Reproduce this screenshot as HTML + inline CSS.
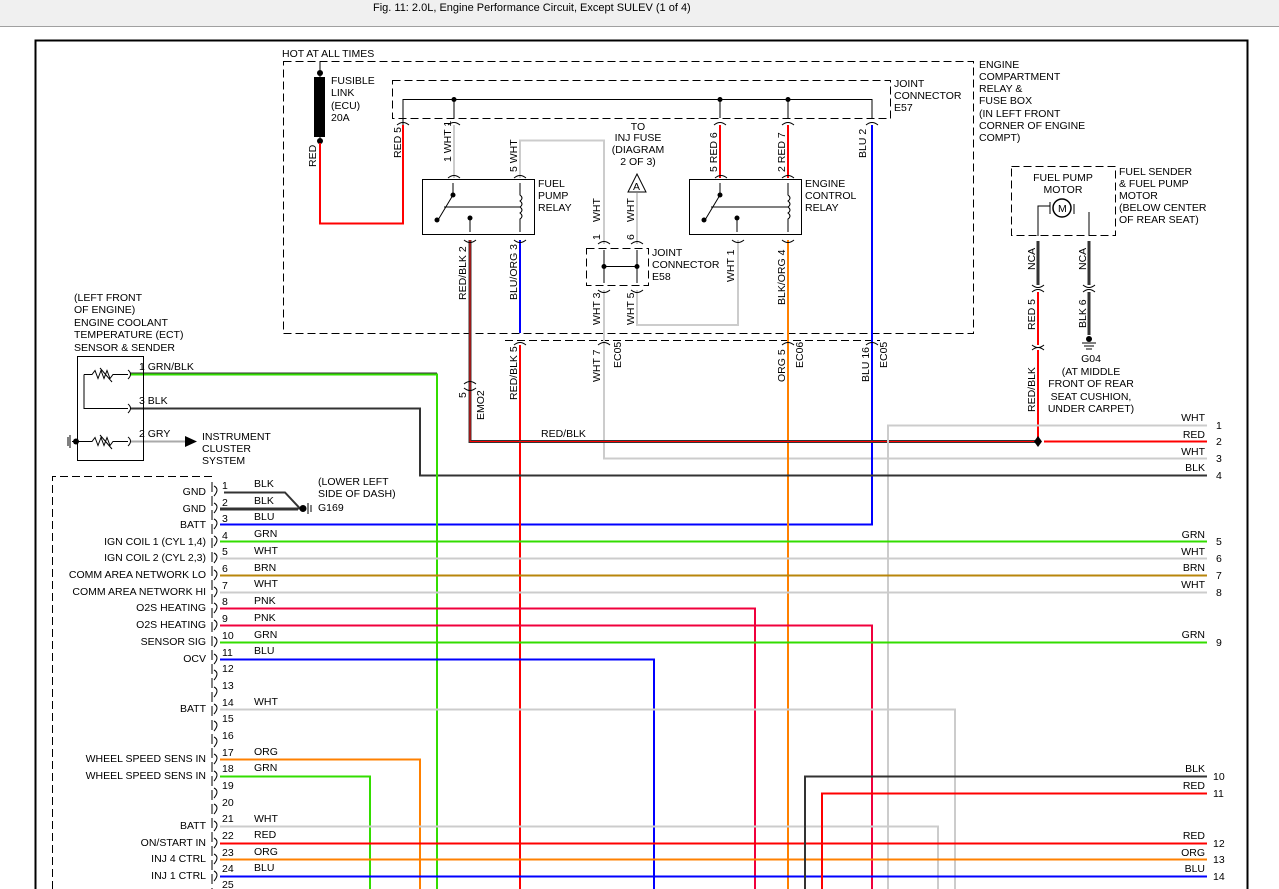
<!DOCTYPE html>
<html><head><meta charset="utf-8"><style>
html,body{margin:0;padding:0;background:#fff;}
svg{display:block;}
text{font-family:"Liberation Sans",Arial,sans-serif;font-size:10.5px;fill:#000;}
.t{font-size:11px;}
</style></head><body>
<svg width="1279" height="889" viewBox="0 0 1279 889" xmlns="http://www.w3.org/2000/svg">
<rect x="0" y="0" width="1279" height="26" fill="#f0f0f0"/>
<line x1="0" y1="26.5" x2="1279" y2="26.5" stroke="#a0a0a0"/>
<text x="373" y="11" class="t">Fig. 11: 2.0L, Engine Performance Circuit, Except SULEV (1 of 4)</text>
<rect x="35.5" y="40.5" width="1212" height="860" fill="none" stroke="#000" stroke-width="2"/>

<g fill="none" stroke="#000" stroke-dasharray="8,4">
<rect x="283.5" y="61.5" width="690" height="272"/>
<rect x="392.5" y="80.5" width="498" height="38"/>
<rect x="586.5" y="248.5" width="62" height="37"/>
<rect x="1011.5" y="166.5" width="104" height="69"/>
<path d="M52.5 889 V476.5 H216"/>
<path d="M505 340.5 H880"/>
</g>

<!-- bus -->
<path d="M403 125 V99.5 H872 V118" fill="none" stroke="#000"/>
<g fill="#000"><circle cx="454" cy="99.5" r="2.5"/><circle cx="720" cy="99.5" r="2.5"/><circle cx="788" cy="99.5" r="2.5"/></g>
<path d="M454 99 V118 M720 99 V118 M788 99 V118" stroke="#000"/>

<!-- fusible link -->
<text x="282" y="57">HOT AT ALL TIMES</text>
<path d="M320 62 V145" stroke="#000"/>
<rect x="314" y="77" width="11" height="60" fill="#000"/>
<circle cx="320" cy="73" r="3"/><circle cx="320" cy="141" r="3"/>
<text x="331" y="84">FUSIBLE</text><text x="331" y="96">LINK</text><text x="331" y="109">(ECU)</text><text x="331" y="121">20A</text>
<path d="M320 143 V223.5 H403 V125" fill="none" stroke="#f00" stroke-width="2"/>

<!-- colored wires top -->
<g fill="none" stroke-width="2">
<path d="M454 125 V178" stroke="#ccc"/>
<path d="M520 178 V140.5 H604 V244" stroke="#ccc"/>
<path d="M637 193 V244" stroke="#ccc"/>
<path d="M604 290 V458.5 H1207" stroke="#ccc"/>
<path d="M637 290 V325 H738 V240" stroke="#ccc"/>
<path d="M720 125 V178" stroke="#f00"/>
<path d="M788 125 V178" stroke="#f00"/>
<path d="M872 125 V524.5 H220" stroke="#00f"/>
<path d="M788 240 V889" stroke="#ff8000"/>
<path d="M520 240 V333" stroke="#00f"/>
<path d="M520 345 V889" stroke="#f00"/>
<path d="M470 240 V441.5 H1038" stroke="#333" stroke-width="3"/>
<path d="M470 240 V441.5 H1038" stroke="#f00" stroke-width="1"/>
<path d="M1038 241 V285" stroke="#333" stroke-width="3"/>
<path d="M1089 241 V285 M1089 292 V335" stroke="#333" stroke-width="3"/>
<path d="M1038 292 V345" stroke="#f00"/>
<path d="M1038 350 V441" stroke="#f00"/>
<path d="M1044 441.5 H1207" stroke="#f00"/>
<path d="M888 889 V425.5 H1207" stroke="#ccc"/>
<path d="M130 408.5 H420 V475.5 H1207" stroke="#333"/>
<path d="M130 374.5 H437 V889" stroke="#33dd00"/>
<path d="M130 373 H437" stroke="#333" stroke-width="1"/>
<path d="M130 441.5 H185" stroke="#aaa"/>
</g>
<path d="M185 436 L197 441.5 L185 447 Z" fill="#000"/>
<path d="M1038 436 L1042 441.5 L1038 447 L1034 441.5 Z" fill="#000"/>

<!-- relays -->
<rect x="422.5" y="179.5" width="112" height="55" fill="none" stroke="#000"/>
<rect x="689.5" y="179.5" width="112" height="55" fill="none" stroke="#000"/>
<g fill="none" stroke="#000">
<path d="M453 183 V195 L438 220 M444 207 H520 M470 219 V232 M520 183 V195 q4 3 0 6 q4 3 0 6 q4 3 0 6 q4 3 0 6 V232"/>
<path d="M720 183 V195 L705 220 M711 207 H788 M737 219 V232 M788 183 V195 q4 3 0 6 q4 3 0 6 q4 3 0 6 q4 3 0 6 V232"/>
</g>
<g fill="#000"><circle cx="453" cy="195" r="2.5"/><circle cx="437" cy="220" r="2.5"/><circle cx="470" cy="218" r="2.5"/>
<circle cx="720" cy="195" r="2.5"/><circle cx="704" cy="220" r="2.5"/><circle cx="737" cy="218" r="2.5"/></g>
<text x="538" y="187">FUEL</text><text x="538" y="199">PUMP</text><text x="538" y="211">RELAY</text>
<text x="805" y="187">ENGINE</text><text x="805" y="199">CONTROL</text><text x="805" y="211">RELAY</text>
<text x="894" y="87">JOINT</text><text x="894" y="99">CONNECTOR</text><text x="894" y="111">E57</text>
<text x="979" y="68">ENGINE</text><text x="979" y="80">COMPARTMENT</text><text x="979" y="92">RELAY &amp;</text><text x="979" y="104">FUSE BOX</text><text x="979" y="117">(IN LEFT FRONT</text><text x="979" y="129">CORNER OF ENGINE</text><text x="979" y="141">COMPT)</text>
<text x="638" y="130" text-anchor="middle">TO</text><text x="638" y="141" text-anchor="middle">INJ FUSE</text><text x="638" y="153" text-anchor="middle">(DIAGRAM</text><text x="638" y="165" text-anchor="middle">2 OF 3)</text>
<path d="M637 174 L646 192 H628 Z" fill="#fff" stroke="#000"/><text x="633" y="190" font-size="9">A</text>
<!-- E58 -->
<path d="M604 250 V283 M637 250 V283 M604 266.5 H637" stroke="#000" fill="none"/>
<circle cx="604" cy="266.5" r="2.5"/><circle cx="637" cy="266.5" r="2.5"/>
<text x="652" y="256">JOINT</text><text x="652" y="268">CONNECTOR</text><text x="652" y="280">E58</text>

<!-- connector marks -->
<g fill="none" stroke="#000" stroke-width="1">
<path d="M397 125 q6 -5 12 0 M448 125 q6 -5 12 0 M714 125 q6 -5 12 0 M782 125 q6 -5 12 0 M866 125 q6 -5 12 0"/>
<path d="M448 178 q6 -5 12 0 M514 178 q6 -5 12 0 M715 178 q6 -5 12 0 M782 178 q6 -5 12 0"/>
<path d="M464 240 q6 5 12 0 M514 240 q6 5 12 0 M732 240 q6 5 12 0 M782 240 q6 5 12 0"/>
<path d="M598 244 q6 -5 12 0 M631 244 q6 -5 12 0 M598 290 q6 5 12 0 M631 290 q6 5 12 0"/>
<path d="M514 345 q6 -5 12 0 M598 345 q6 -5 12 0 M782 345 q6 -5 12 0 M866 345 q6 -5 12 0"/>
<path d="M464 384 q6 -5 12 0 M464 388 q6 5 12 0"/>
<path d="M1032 285 q6 5 12 0 M1032 292 q6 -5 12 0 M1083 285 q6 5 12 0 M1083 292 q6 -5 12 0 M1032 345 q6 5 12 0 M1032 350 q6 -5 12 0"/>
</g>

<!-- rotated labels -->
<g font-size="10">
<text transform="translate(316,167) rotate(-90)">RED</text>
<text transform="translate(401,158) rotate(-90)">RED 5</text>
<text transform="translate(451,162) rotate(-90)">1  WHT 1</text>
<text transform="translate(517,172) rotate(-90)">5  WHT</text>
<text transform="translate(600,222) rotate(-90)">WHT</text>
<text transform="translate(634,222) rotate(-90)">WHT</text>
<text transform="translate(717,172) rotate(-90)">5  RED 6</text>
<text transform="translate(785,172) rotate(-90)">2  RED 7</text>
<text transform="translate(866,158) rotate(-90)">BLU 2</text>
<text transform="translate(466,300) rotate(-90)">RED/BLK  2</text>
<text transform="translate(517,300) rotate(-90)">BLU/ORG  3</text>
<text transform="translate(600,240) rotate(-90)">1</text><text transform="translate(634,240) rotate(-90)">6</text>
<text transform="translate(600,325) rotate(-90)">WHT 3</text><text transform="translate(634,325) rotate(-90)">WHT 5</text>
<text transform="translate(734,282) rotate(-90)">WHT  1</text>
<text transform="translate(785,305) rotate(-90)">BLK/ORG  4</text>
<text transform="translate(517,400) rotate(-90)">RED/BLK  5</text>
<text transform="translate(600,382) rotate(-90)">WHT  7</text><text transform="translate(621,368) rotate(-90)">EC05</text>
<text transform="translate(785,382) rotate(-90)">ORG  5</text><text transform="translate(803,368) rotate(-90)">EC06</text>
<text transform="translate(869,382) rotate(-90)">BLU  16</text><text transform="translate(887,368) rotate(-90)">EC05</text>
<text transform="translate(466,398) rotate(-90)">5</text><text transform="translate(484,420) rotate(-90)">EMO2</text>
<text transform="translate(1035,270) rotate(-90)">NCA</text><text transform="translate(1086,270) rotate(-90)">NCA</text>
<text transform="translate(1035,330) rotate(-90)">RED  5</text><text transform="translate(1086,328) rotate(-90)">BLK  6</text>
<text transform="translate(1035,412) rotate(-90)">RED/BLK</text>
</g>
<text x="541" y="437">RED/BLK</text>

<!-- fuel pump -->
<text x="1063" y="181" text-anchor="middle">FUEL PUMP</text><text x="1063" y="193" text-anchor="middle">MOTOR</text>
<circle cx="1062" cy="208" r="9" fill="none" stroke="#000" stroke-width="1.5"/><text x="1058" y="212" font-size="9">M</text>
<path d="M1038 236 V206 H1050 M1074 204 V214 M1089 212 V236 M1050 202 V214" stroke="#000" fill="none"/>
<text x="1119" y="175">FUEL SENDER</text><text x="1119" y="187">&amp; FUEL PUMP</text><text x="1119" y="199">MOTOR</text><text x="1119" y="211">(BELOW CENTER</text><text x="1119" y="223">OF REAR SEAT)</text>
<circle cx="1089" cy="339" r="3"/><path d="M1082 343 H1096 M1084 346 H1094 M1086 349 H1092" stroke="#000"/>
<text x="1091" y="362" text-anchor="middle">G04</text><text x="1091" y="375" text-anchor="middle">(AT MIDDLE</text><text x="1091" y="387" text-anchor="middle">FRONT OF REAR</text><text x="1091" y="400" text-anchor="middle">SEAT CUSHION,</text><text x="1091" y="412" text-anchor="middle">UNDER CARPET)</text>

<!-- ECT -->
<text x="74" y="301">(LEFT FRONT</text><text x="74" y="313">OF ENGINE)</text><text x="74" y="326">ENGINE COOLANT</text><text x="74" y="338">TEMPERATURE (ECT)</text><text x="74" y="351">SENSOR &amp; SENDER</text>
<rect x="77.5" y="356.5" width="66" height="104" fill="none" stroke="#000"/>
<path d="M84 374.5 H92 l3 -4 l3 8 l3 -8 l3 8 l3 -8 l3 8 l3 -4 H128 M84 374.5 V408.5 H128 M72 441.5 H92 l3 -4 l3 8 l3 -8 l3 8 l3 -8 l3 8 l3 -4 H128 M100 368 L112 382 M100 435 L112 449" fill="none" stroke="#000"/>
<path d="M68 437 V446 M70 435 V448" stroke="#000"/><circle cx="76" cy="441.5" r="3"/>
<g fill="none" stroke="#000"><path d="M128 370 q5 4 0 9 M128 404 q5 4 0 9 M128 437 q5 4 0 9"/></g>
<text x="139" y="370">1  GRN/BLK</text><text x="139" y="404">3  BLK</text><text x="139" y="437">2  GRY</text>
<text x="202" y="440">INSTRUMENT</text><text x="202" y="452">CLUSTER</text><text x="202" y="464">SYSTEM</text>

<!-- ECU pins -->
<path d="M224 492.5 H285 L300 508.5 H220" fill="none" stroke="#333" stroke-width="2"/>
<path d="M220 509.5 H298" stroke="#333" stroke-width="2"/>
<circle cx="303" cy="508.5" r="3.5"/><path d="M308 503 V514 M311 505 V512" stroke="#000"/>
<text x="318" y="485">(LOWER LEFT</text><text x="318" y="497">SIDE OF DASH)</text><text x="318" y="511">G169</text>

<g fill="none" stroke-width="2">
<path d="M220 541.5 H1207" stroke="#33dd00"/>
<path d="M220 558.5 H1207" stroke="#ccc"/>
<path d="M220 575.5 H1207" stroke="#b8860b"/>
<path d="M220 592.5 H1207" stroke="#ccc"/>
<path d="M220 608.5 H755 V889" stroke="#f0003c"/>
<path d="M220 625.5 H872 V889" stroke="#f0003c"/>
<path d="M220 642.5 H1207" stroke="#33dd00"/>
<path d="M220 659.5 H654 V889" stroke="#00f"/>
<path d="M220 709.5 H955 V889" stroke="#ccc"/>
<path d="M220 759.5 H420 V889" stroke="#ff8000"/>
<path d="M220 776.5 H370 V889" stroke="#33dd00"/>
<path d="M220 826.5 H938 V889" stroke="#ccc"/>
<path d="M220 843.5 H1207" stroke="#f00"/>
<path d="M220 859.5 H1207" stroke="#ff8000"/>
<path d="M220 876.5 H1207" stroke="#00f"/>
<path d="M805 889 V776.5 H1207" stroke="#333"/>
<path d="M822 889 V793.5 H1207" stroke="#f00"/>
</g>

<g>
<text x="206" y="495" text-anchor="end">GND</text><text x="206" y="512" text-anchor="end">GND</text><text x="206" y="528" text-anchor="end">BATT</text>
<text x="206" y="545" text-anchor="end">IGN COIL 1 (CYL 1,4)</text><text x="206" y="561" text-anchor="end">IGN COIL 2 (CYL 2,3)</text>
<text x="206" y="578" text-anchor="end">COMM AREA NETWORK LO</text><text x="206" y="595" text-anchor="end">COMM AREA NETWORK HI</text>
<text x="206" y="611" text-anchor="end">O2S HEATING</text><text x="206" y="628" text-anchor="end">O2S HEATING</text>
<text x="206" y="645" text-anchor="end">SENSOR SIG</text><text x="206" y="662" text-anchor="end">OCV</text>
<text x="206" y="712" text-anchor="end">BATT</text>
<text x="206" y="762" text-anchor="end">WHEEL SPEED SENS IN</text><text x="206" y="779" text-anchor="end">WHEEL SPEED SENS IN</text>
<text x="206" y="829" text-anchor="end">BATT</text><text x="206" y="846" text-anchor="end">ON/START IN</text>
<text x="206" y="862" text-anchor="end">INJ 4 CTRL</text><text x="206" y="879" text-anchor="end">INJ 1 CTRL</text>
</g>
<g stroke="#000" fill="none">
<path d="M212 482 V889" stroke-dasharray="10,4"/>
<path d="M214 486 q6 3 0 10 M214 503 q6 3 0 10 M214 519 q6 3 0 10 M214 536 q6 3 0 10 M214 553 q6 3 0 10 M214 570 q6 3 0 10 M214 587 q6 3 0 10 M214 603 q6 3 0 10 M214 620 q6 3 0 10 M214 637 q6 3 0 10 M214 654 q6 3 0 10 M214 670 q6 3 0 10 M214 687 q6 3 0 10 M214 704 q6 3 0 10 M214 721 q6 3 0 10 M214 737 q6 3 0 10 M214 754 q6 3 0 10 M214 771 q6 3 0 10 M214 788 q6 3 0 10 M214 804 q6 3 0 10 M214 821 q6 3 0 10 M214 838 q6 3 0 10 M214 854 q6 3 0 10 M214 871 q6 3 0 10"/>
</g>
<g font-size="10">
<text x="222" y="489">1</text><text x="222" y="506">2</text><text x="222" y="522">3</text><text x="222" y="539">4</text><text x="222" y="555">5</text><text x="222" y="572">6</text><text x="222" y="589">7</text><text x="222" y="605">8</text><text x="222" y="622">9</text><text x="222" y="639">10</text><text x="222" y="656">11</text><text x="222" y="672">12</text><text x="222" y="689">13</text><text x="222" y="706">14</text><text x="222" y="722">15</text><text x="222" y="739">16</text><text x="222" y="756">17</text><text x="222" y="772">18</text><text x="222" y="789">19</text><text x="222" y="806">20</text><text x="222" y="822">21</text><text x="222" y="839">22</text><text x="222" y="856">23</text><text x="222" y="872">24</text><text x="222" y="888">25</text>
<text x="254" y="487">BLK</text><text x="254" y="504">BLK</text><text x="254" y="520">BLU</text><text x="254" y="537">GRN</text><text x="254" y="554">WHT</text><text x="254" y="571">BRN</text><text x="254" y="587">WHT</text><text x="254" y="604">PNK</text><text x="254" y="621">PNK</text><text x="254" y="638">GRN</text><text x="254" y="654">BLU</text><text x="254" y="705">WHT</text><text x="254" y="755">ORG</text><text x="254" y="771">GRN</text><text x="254" y="822">WHT</text><text x="254" y="838">RED</text><text x="254" y="855">ORG</text><text x="254" y="871">BLU</text>
</g>
<!-- right labels -->
<g font-size="10">
<text x="1205" y="421" text-anchor="end">WHT</text><text x="1205" y="438" text-anchor="end">RED</text><text x="1205" y="455" text-anchor="end">WHT</text><text x="1205" y="471" text-anchor="end">BLK</text>
<text x="1205" y="538" text-anchor="end">GRN</text><text x="1205" y="555" text-anchor="end">WHT</text><text x="1205" y="571" text-anchor="end">BRN</text><text x="1205" y="588" text-anchor="end">WHT</text><text x="1205" y="638" text-anchor="end">GRN</text>
<text x="1205" y="772" text-anchor="end">BLK</text><text x="1205" y="789" text-anchor="end">RED</text><text x="1205" y="839" text-anchor="end">RED</text><text x="1205" y="856" text-anchor="end">ORG</text><text x="1205" y="872" text-anchor="end">BLU</text>
<text x="1216" y="429">1</text><text x="1216" y="445">2</text><text x="1216" y="462">3</text><text x="1216" y="479">4</text><text x="1216" y="545">5</text><text x="1216" y="562">6</text><text x="1216" y="579">7</text><text x="1216" y="596">8</text><text x="1216" y="646">9</text>
<text x="1213" y="780">10</text><text x="1213" y="797">11</text><text x="1213" y="847">12</text><text x="1213" y="863">13</text><text x="1213" y="880">14</text>
</g>
</svg>
</body></html>
